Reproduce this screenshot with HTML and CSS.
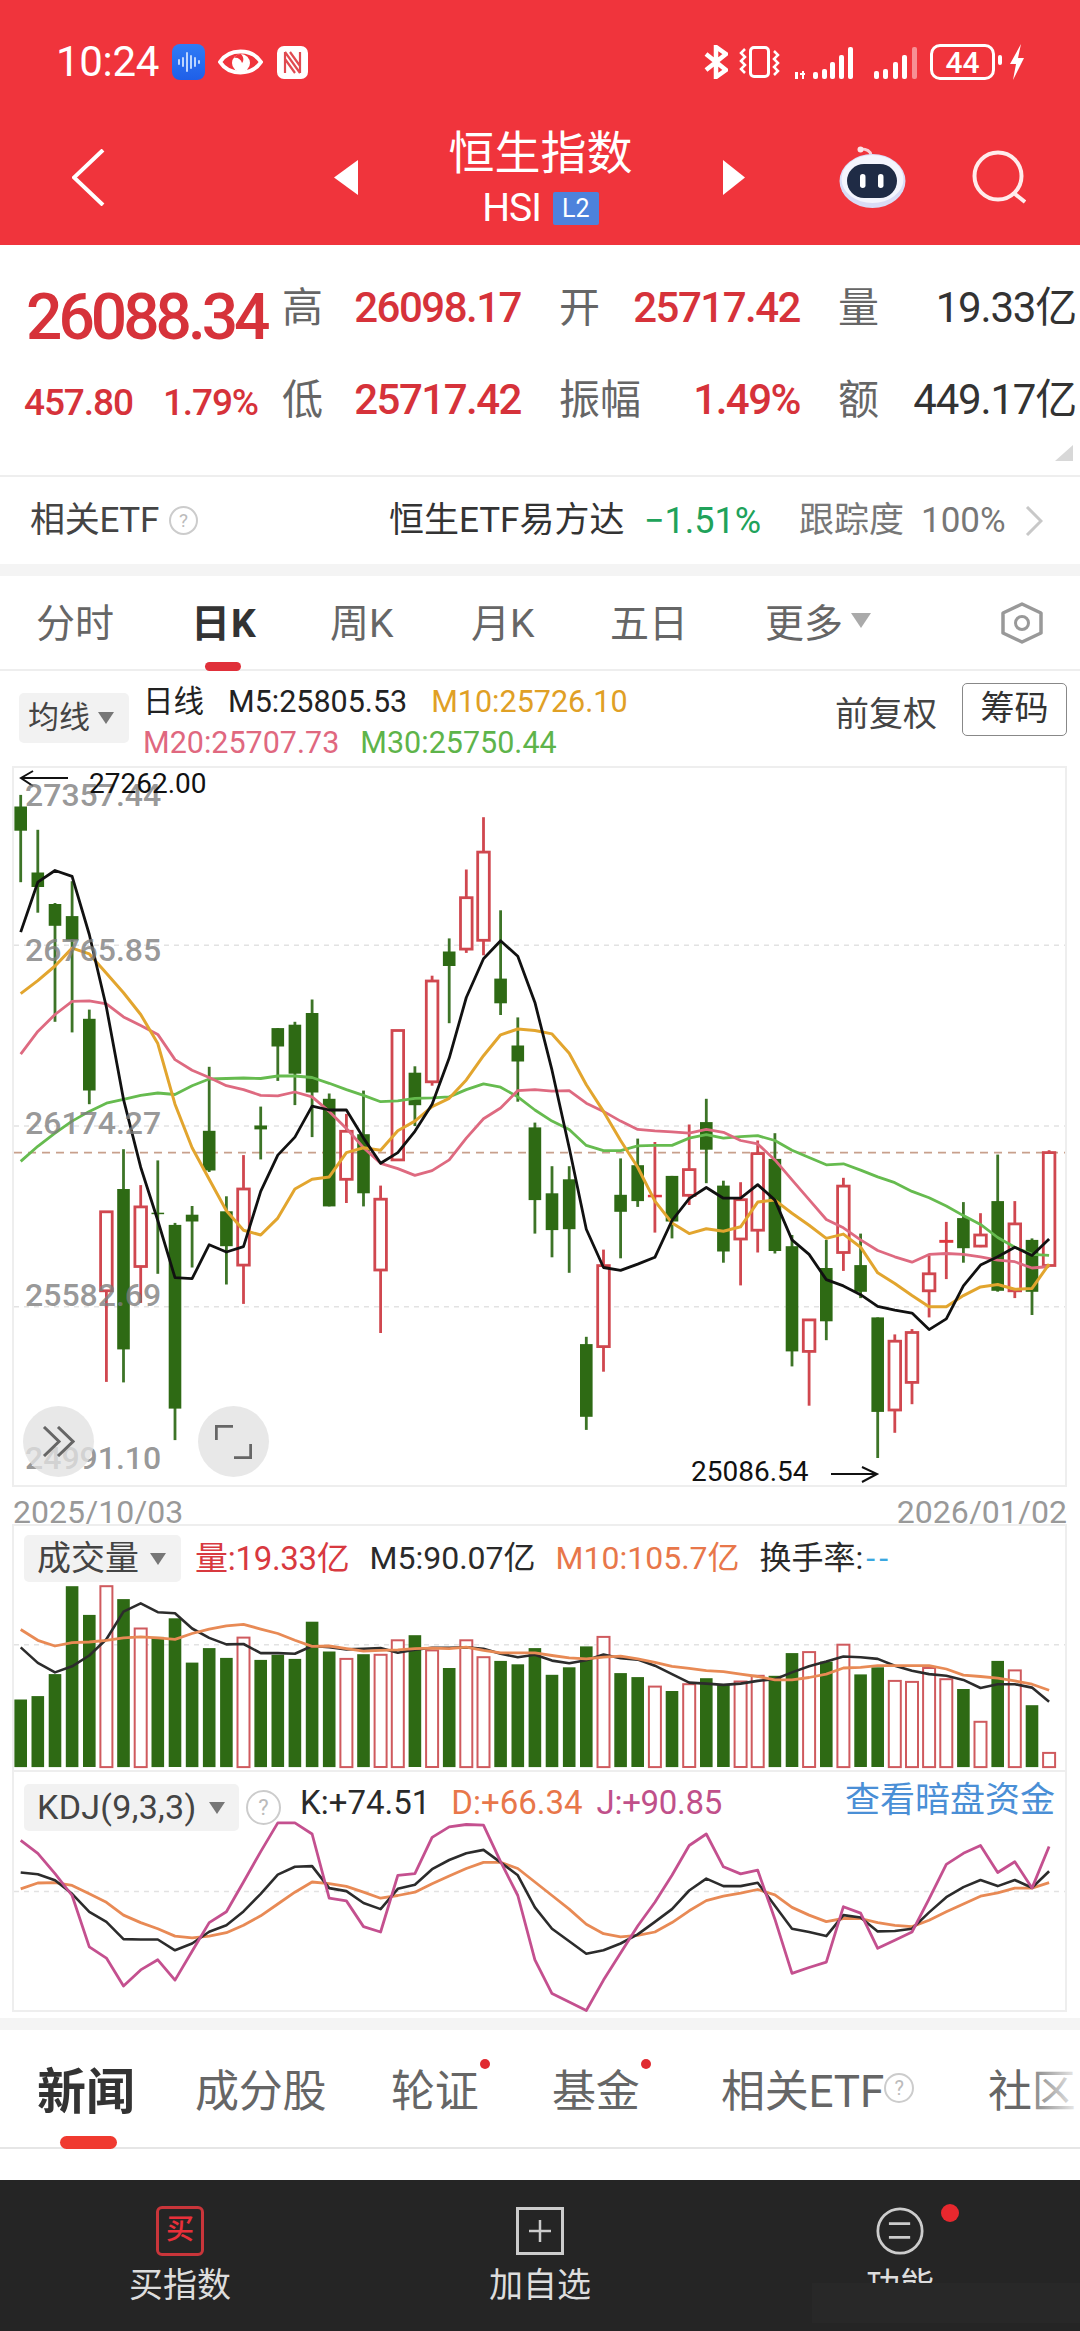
FILE: index.html
```html
<!DOCTYPE html>
<html lang="zh-CN">
<head>
<meta charset="utf-8">
<title>恒生指数</title>
<link rel="stylesheet" href="styles.css">
</head>
<body>
<div class="page">
  <header class="top">
    <div class="status">
      <span class="clock">10:24</span>
      <svg class="st-rec" viewBox="0 0 33 36"><defs><linearGradient id="recfill" x1="0" y1="0" x2="0" y2="1"><stop offset="0" stop-color="#2f7cf6"/><stop offset="1" stop-color="#1f5fe8"/></linearGradient></defs><rect width="33" height="36" rx="8" fill="url(#recfill)"/><path d="M7 16v4M11 14v8M15 9v18M19 12v12M23 14v8M27 17v2" stroke="#cfe2ff" stroke-width="1.800" fill="none" stroke-linecap="round"/></svg>
      <svg class="st-eye" viewBox="0 0 45 30"><path d="M2 15C11 1 34 1 43 15 34 29 11 29 2 15Z" fill="none" stroke="#fff" stroke-width="4"/><circle cx="23" cy="16" r="9" fill="#fff"/><path d="M23 7a9 9 0 0 0-7 4c3-1 7 1 8 5 2-2 2-6-1-9z" fill="#f0343c"/></svg>
      <svg class="st-nfc" viewBox="0 0 31 33"><rect width="31" height="33" rx="7" fill="#fff"/><path d="M8 6v21M23 6v21M8 6l15 21M13 6l10 14M8 13l10 14" stroke="#e04a50" stroke-width="2.200" fill="none"/></svg>
      <span class="st-spacer"></span>
      <svg class="st-bt" viewBox="0 0 24 34"><path d="M2 9l20 16-10 7V2l10 7L2 25" fill="none" stroke="#fff" stroke-width="4.500"/></svg>
      <svg class="st-vib" viewBox="0 0 41 32"><rect x="11.500" y="1.500" width="18" height="29" rx="3.500" fill="none" stroke="#fff" stroke-width="3"/><path d="M6 3L2 7l4 4-4 4 4 4-4 4 4 4M35 5l4 4-4 4 4 4-4 4 4 4 -4 4" fill="none" stroke="#fff" stroke-width="2.500"/></svg>
      <svg class="st-sig" viewBox="0 0 58 33"><rect x="0" y="26" width="3" height="7" fill="#fff"/><rect x="5" y="27" width="5" height="2" fill="#fff"/><rect x="7" y="25" width="2" height="8" fill="#fff"/><rect x="18" y="26" width="5" height="7" rx="2" fill="#fff"/><rect x="27" y="23" width="5" height="10" rx="2" fill="#fff"/><rect x="35" y="16" width="5" height="17" rx="2" fill="#fff"/><rect x="44" y="9" width="5" height="24" rx="2" fill="#fff"/><rect x="53" y="1" width="5" height="32" rx="2" fill="#fff"/></svg>
      <svg class="st-sig2" viewBox="0 0 43 33"><rect x="0" y="25" width="5" height="8" rx="2" fill="#fff"/><rect x="9" y="23" width="5" height="10" rx="2" fill="#fff"/><rect x="19" y="16" width="5" height="17" rx="2" fill="#fff"/><rect x="28" y="9" width="5" height="24" rx="2" fill="#fff"/><rect x="38" y="1" width="5" height="32" rx="2" fill="#fff" opacity=".45"/></svg>
      <span class="battery">44</span>
      <svg class="st-bolt" viewBox="0 0 17 36"><path d="M13 0L2 20h6L5 36 16 14h-6z" fill="#fff"/></svg>
    </div>
    <nav class="nav">
      <svg class="back" viewBox="0 0 33 57"><path d="M31 1L2 28.500 31 56" fill="none" stroke="#fff" stroke-width="4"/></svg>
      <svg class="tri-l" viewBox="0 0 24 35"><path d="M24 0v35L0 17.500z" fill="#fff"/></svg>
      <div class="title">
        <div class="title-main">恒生指数</div>
        <div class="title-sub"><span class="hsi">HSI</span><span class="l2">L2</span></div>
      </div>
      <svg class="tri-r" viewBox="0 0 22 35"><path d="M0 0v35l22-17.500z" fill="#fff"/></svg>
      <svg class="robot" viewBox="0 0 67 62"><path d="M32 9C31 4 27 3 22 3" fill="none" stroke="#f8d0d8" stroke-width="2.800"/><circle cx="21.500" cy="3.500" r="3" fill="#fbe4e8"/><ellipse cx="33.500" cy="35" rx="33" ry="27" fill="#d9dcf6"/><ellipse cx="33.500" cy="33" rx="31" ry="24" fill="#f4f5fd"/><rect x="8" y="18" width="50" height="34" rx="17" fill="#1f2b45"/><rect x="21" y="28" width="5.500" height="14" rx="2.700" fill="#fff"/><rect x="39" y="28" width="5.500" height="14" rx="2.700" fill="#fff"/></svg>
      <svg class="search" viewBox="0 0 54 54"><circle cx="26" cy="26" r="23.500" fill="none" stroke="#ffecec" stroke-width="4"/><path d="M43 44l10 8" fill="none" stroke="#ffecec" stroke-width="4"/></svg>
    </nav>
  </header>

  <section class="quote">
    <div class="stats">
      <div class="big">26088.34</div>
      <div class="cell"><span class="lab">高</span><span class="val">26098.17</span></div>
      <div class="cell"><span class="lab">开</span><span class="val">25717.42</span></div>
      <div class="cell"><span class="lab">量</span><span class="val dark">19.33亿</span></div>
      <div class="change"><span>457.80</span><span>1.79%</span></div>
      <div class="cell"><span class="lab">低</span><span class="val">25717.42</span></div>
      <div class="cell"><span class="lab">振幅</span><span class="val">1.49%</span></div>
      <div class="cell"><span class="lab">额</span><span class="val dark">449.17亿</span></div>
      <svg class="corner" viewBox="0 0 18 16"><path d="M18 0v16H0z" fill="#d8d8d8"/></svg>
    </div>
    <div class="etf">
      <span class="etf-name">相关ETF</span>
      <span class="help help-etf">?</span>
      <span class="etf-fund">恒生ETF易方达</span>
      <span class="etf-chg">−1.51%</span>
      <span class="etf-grey etf-track">跟踪度</span>
      <span class="etf-grey etf-pct">100%</span>
      <svg class="etf-more" viewBox="0 0 18 30"><path d="M2 1l14 14L2 29" fill="none" stroke="#c8c8c8" stroke-width="3"/></svg>
    </div>
  </section>

  <div class="band"></div>

  <div class="ktabs">
    <span class="ktab">分时</span>
    <span class="ktab active">日K</span>
    <span class="ktab">周K</span>
    <span class="ktab">月K</span>
    <span class="ktab">五日</span>
    <span class="ktab">更多<i class="caret"></i></span>
    <svg class="hex" viewBox="0 0 44 42"><path d="M22 2l19 9v20l-19 9-19-9V11z" fill="none" stroke="#999" stroke-width="3.500" stroke-linejoin="round"/><circle cx="22" cy="21" r="6.500" fill="none" stroke="#999" stroke-width="3"/></svg>
  </div>

  <div class="legend">
    <div class="drop drop-ma">均线<i class="caret dk"></i></div>
    <div class="ma-text">
      <div class="ma-line"><span class="c-k">日线</span><span class="c-k">M5:25805.53</span><span class="c-o">M10:25726.10</span></div>
      <div class="ma-line ma-line-b"><span class="c-p">M20:25707.73</span><span class="c-g">M30:25750.44</span></div>
    </div>
    <span class="adj">前复权</span>
    <span class="chips">筹码</span>
  </div>

  <div class="panel chart">
    <svg class="plot" id="main" viewBox="0 766 1080 721"></svg>
    <span class="axis ax1">27357.44</span>
    <span class="axis ax2">26765.85</span>
    <span class="axis ax3">26174.27</span>
    <span class="axis ax4">25582.69</span>
    <span class="axis ax5">24991.10</span>
    <span class="mark mark-hi">27262.00</span>
    <span class="mark mark-lo">25086.54</span>
    <span class="round round-a"><svg viewBox="0 0 33 31"><path d="M2 1l15 14.500L2 30M16 1l15 14.500L16 30" fill="none" stroke="#666" stroke-width="3"/></svg></span>
    <span class="round round-b"><svg viewBox="0 0 37 34"><path d="M1 15V1h17M36 19v14H19" fill="none" stroke="#666" stroke-width="3.500"/></svg></span>
  </div>

  <div class="dates"><span>2025/10/03</span><span>2026/01/02</span></div>

  <div class="panel vol">
    <svg class="plot" id="vol" viewBox="0 1524 1080 248"></svg>
    <div class="vol-head">
      <div class="drop drop-vol">成交量<i class="caret dk"></i></div>
      <span class="c-r">量:19.33亿</span>
      <span class="c-k2">M5:90.07亿</span>
      <span class="c-or">M10:105.7亿</span>
      <span class="c-k2">换手率:<b class="dashes">--</b></span>
    </div>
  </div>

  <div class="panel kdj">
    <svg class="plot" id="kdj" viewBox="0 1772 1080 240"></svg>
    <div class="kdj-head">
      <div class="drop drop-kdj">KDJ(9,3,3)<i class="caret dk"></i></div>
      <span class="help help-kdj">?</span>
      <span class="c-k2 kv kv-k">K:+74.51</span>
      <span class="c-or kv kv-d">D:+66.34</span>
      <span class="c-m kv kv-j">J:+90.85</span>
      <span class="dark-pool">查看暗盘资金</span>
    </div>
  </div>

  <div class="gap-white"></div>
  <div class="band"></div>

  <div class="ntabs">
    <span class="ntab active">新闻</span>
    <span class="ntab">成分股</span>
    <span class="ntab dotted">轮证</span>
    <span class="ntab dotted">基金</span>
    <span class="ntab">相关ETF<span class="help help-n">?</span></span>
    <span class="ntab">社区</span>
  </div>

  <div class="spacer"></div>

  <footer class="bottom">
    <div class="action">
      <span class="ic ic-buy">买</span>
      <span class="act-label">买指数</span>
    </div>
    <div class="action">
      <svg class="ic" viewBox="0 0 48 48"><rect x="1.500" y="1.500" width="45" height="45" fill="none" stroke="#ccc" stroke-width="3"/><path d="M24 13v22M13 24h22" stroke="#ccc" stroke-width="2.500"/></svg>
      <span class="act-label">加自选</span>
    </div>
    <div class="action">
      <svg class="ic" viewBox="0 0 52 52"><circle cx="26" cy="26" r="24" fill="none" stroke="#ccc" stroke-width="3"/><path d="M14 18h23M14 33h23" stroke="#ccc" stroke-width="3"/></svg>
      <span class="act-label">功能</span>
      <i class="act-dot"></i>
    </div>
    <div class="smudge"></div>
  </footer>
</div>
<script src="script.js"></script>
</body>
</html>
```
FILE: styles.css
```css
* { box-sizing: border-box; }
html, body { margin: 0; padding: 0; background: #fff; }
body { font-family: Roboto, "Noto Sans CJK SC", sans-serif; color: #222; }
.page { width: 1080px; height: 2331px; overflow: hidden; display: flex; flex-direction: column; }
svg { display: block; flex: none; }
i { font-style: normal; }

/* red header */
.top { background: #f0343c; height: 245px; color: #fff; flex: none; }
.status { height: 109px; padding: 15px 55px 0 56px; display: flex; align-items: center; }
.clock { font-size: 42px; line-height: 50px; width: 116px; letter-spacing: -0.300px; }
.st-rec { width: 33px; height: 36px; }
.st-eye { width: 45px; height: 30px; margin-left: 13px; }
.st-nfc { width: 31px; height: 33px; margin-left: 14px; }
.st-spacer { flex: 1; }
.st-bt { width: 24px; height: 34px; }
.st-vib { width: 41px; height: 32px; margin-left: 11px; }
.st-sig { width: 58px; height: 33px; margin-left: 15px; align-self: center; }
.st-sig2 { width: 43px; height: 33px; margin-left: 21px; }
.battery { width: 65px; height: 36px; margin-left: 13px; border: 3px solid #fff; border-radius: 10px; font-size: 30px; font-weight: 500; line-height: 31px; text-align: center; position: relative; }
.battery::after { content: ""; position: absolute; right: -10px; top: 8px; width: 4px; height: 10px; border-radius: 2px; background: #fff; }
.st-bolt { width: 17px; height: 36px; margin-left: 13px; }

.nav { height: 136px; padding-left: 72px; display: flex; align-items: center; }
.back { width: 33px; height: 57px; }
.tri-l { width: 24px; height: 35px; margin-left: 229px; }
.title { width: 365px; text-align: center; }
.title-main { font-size: 46px; line-height: 54px; }
.title-sub { display: flex; justify-content: center; align-items: center; gap: 12px; height: 40px; margin-top: 8px; }
.hsi { font-size: 39px; line-height: 40px; letter-spacing: -1px; }
.l2 { background: #4d82dc; width: 46px; height: 33px; font-size: 25px; line-height: 33px; text-align: center; border-radius: 2px; }
.tri-r { width: 22px; height: 35px; }
.robot { width: 67px; height: 62px; margin-left: 94px; }
.search { width: 54px; height: 54px; margin-left: 66px; }

/* quote */
.quote { height: 319px; flex: none; }
.stats { height: 232px; padding: 17px 4px 0 24px; border-bottom: 2px solid #eee; display: grid; grid-template-columns: 220px 239px 241px 238px; column-gap: 38px; grid-auto-rows: 92px; position: relative; }
.big { font-size: 64px; height: 92px; line-height: 112px; font-weight: 500; color: #d6323a; letter-spacing: -4px; margin-left: 2px; white-space: nowrap; }
.cell { display: flex; justify-content: space-between; align-items: center; }
.lab { font-size: 41px; line-height: 50px; color: #666; white-space: nowrap; }
.val { font-size: 42px; line-height: 50px; font-weight: 500; color: #d6323a; letter-spacing: -1.500px; white-space: nowrap; }
.val.dark { color: #333; font-weight: 400; letter-spacing: -1.200px; }
.change { display: flex; justify-content: space-between; align-items: center; width: 234px; padding-top: 5px; color: #d6323a; font-size: 37px; font-weight: 500; letter-spacing: -1.100px; white-space: nowrap; }
.corner { position: absolute; right: 7px; bottom: 14px; width: 18px; height: 16px; }
.etf { height: 87px; padding: 0 37px 0 30px; display: flex; align-items: center; color: #444; font-size: 35px; }
.etf > span { line-height: 44px; white-space: nowrap; }
.etf-name { width: 139px; letter-spacing: -0.300px; }
.help { display: inline-block; border: 2px solid #ccc; border-radius: 50%; color: #bbb; text-align: center; font-weight: 400; }
.help-etf { width: 29px; height: 29px; font-size: 19px; line-height: 25px !important; }
.etf-fund { margin-left: auto; width: 255px; font-size: 35px; color: #333; }
.etf-chg { width: 155px; color: #20a25a; font-size: 36px; letter-spacing: 0; }
.etf-grey { color: #777; }
.etf-track { width: 122px; font-size: 35px; }
.etf-pct { width: 104px; }
.etf-more { width: 18px; height: 30px; }

.band { height: 12px; background: #f4f4f4; flex: none; }

/* k tabs */
.ktabs { height: 95px; padding-left: 36px; border-bottom: 2px solid #eee; display: grid; grid-template-columns: 155px 139px 141px 139px 155px 235px 44px; align-items: stretch; flex: none; }
.ktab { display: flex; align-items: center; padding-bottom: 5px; font-size: 39px; color: #666; position: relative; white-space: nowrap; }
.ktab.active { color: #333; font-weight: 700; letter-spacing: 1px; }
.ktab.active::after { content: ""; position: absolute; left: 14px; bottom: -2px; width: 36px; height: 9px; border-radius: 5px; background: #e0303a; }
.caret { display: inline-block; width: 0; height: 0; border-left: 10px solid transparent; border-right: 10px solid transparent; border-top: 15px solid #aaa; margin-left: 8px; }
.caret.dk { border-left-width: 8px; border-right-width: 8px; border-top: 12px solid #777; }
.hex { width: 44px; height: 42px; align-self: center; }

/* legend */
.legend { height: 95px; padding: 0 13px 0 19px; display: flex; align-items: flex-start; flex: none; }
.drop { background: #f2f2f2; border-radius: 5px; display: flex; align-items: center; color: #444; white-space: nowrap; }
.drop-ma { width: 110px; height: 50px; margin-top: 22px; padding-left: 9px; font-size: 31px; line-height: 50px; }
.ma-text { margin: 10px 0 0 14px; font-size: 30.500px; line-height: 41px; }
.ma-line { display: flex; gap: 24px; white-space: nowrap; }
.ma-line-b { gap: 21px; }
.c-k { color: #222; }
.c-o { color: #e0a025; }
.c-p { color: #e0687f; }
.c-g { color: #5eb44a; }
.adj { margin: 21px 0 0 auto; font-size: 34px; line-height: 44px; color: #444; }
.chips { width: 105px; height: 53px; margin: 12px 0 0 25px; border: 1.500px solid #888; border-radius: 5px; font-size: 34px; line-height: 49px; text-align: center; color: #333; }

/* panels */
.panel { position: relative; margin-left: 12px; width: 1055px; border: 2px solid #eee; flex: none; }
.plot { position: absolute; left: -14px; top: -2px; width: 1080px; }
.chart { height: 721px; }
.chart .plot { height: 721px; }
.vol { height: 248px; }
.vol .plot { height: 248px; }
.kdj { height: 240px; border-top: 0; }
.kdj .plot { height: 240px; top: 0; }

/* chart marks */
.grid { stroke: #e2e2e2; stroke-width: 1.500; stroke-dasharray: 5 5; }
.price { stroke: #c8a08c; stroke-width: 1.800; stroke-dasharray: 8 6; }
.wick-g { stroke: #3d7427; stroke-width: 2.800; }
.wick-r, .wick-d { stroke: #d0474f; stroke-width: 2.800; }
.body-g { fill: #2e6a14; }
.body-r { fill: #fff; stroke: #d0474f; stroke-width: 2.800; }
.body-d { fill: #e0383f; }
.bar-r { fill: #fff; stroke: #cf5a5e; stroke-width: 2; }
.ln { fill: none; stroke-width: 2.600; stroke-linejoin: round; }
.l-k { stroke: #111; stroke-width: 2.800; }
.l-o { stroke: #e2a52e; stroke-width: 3; }
.l-p { stroke: #de6a80; stroke-width: 2.800; }
.l-g { stroke: #66bb4f; stroke-width: 2.800; }
.l-k2 { stroke: #2c2c2c; }
.l-or { stroke: #e88a55; stroke-width: 2.800; }
.l-m { stroke: #c4508f; stroke-width: 2.800; }
.arrow { fill: none; stroke: #111; stroke-width: 2; }

.axis { position: absolute; left: 11px; font-size: 32px; line-height: 36px; font-weight: 500; color: rgba(125,125,125,.8); }
.ax1 { top: 9px; }
.ax2 { top: 164px; }
.ax3 { top: 337px; }
.ax4 { top: 509px; }
.ax5 { top: 672px; }
.mark { position: absolute; font-size: 28px; line-height: 34px; color: #111; }
.mark-hi { left: 75px; top: -1px; }
.mark-lo { left: 677px; top: 687px; }
.round { position: absolute; top: 638px; width: 71px; height: 71px; border-radius: 50%; background: rgba(226,226,226,.78); display: flex; align-items: center; justify-content: center; }
.round-a { left: 9px; }
.round-b { left: 184px; }
.round-a svg { width: 33px; height: 31px; }
.round-b svg { width: 37px; height: 34px; }

.dates { height: 37px; padding: 13px 13px 0; display: flex; justify-content: space-between; font-size: 32px; line-height: 24px; color: #999; flex: none; }

.vol-head, .kdj-head { position: relative; display: flex; align-items: center; padding-left: 10px; font-size: 32px; white-space: nowrap; }
.vol-head { padding-top: 9px; line-height: 47px; }
.vol-head > span { margin-left: 20px; }
.vol-head > .c-r { margin-left: 14px; font-size: 33px; letter-spacing: -0.300px; }
.drop-vol { width: 157px; height: 47px; padding-left: 13px; font-size: 34px; }
.drop-vol .caret { margin-left: 11px; }
.c-r { color: #d8393f; }
.c-k2 { color: #2a2a2a; }
.c-or { color: #e8774a; }
.c-m { color: #c0508a; }
.dashes { color: #3aa7e0; font-weight: 400; letter-spacing: 4px; margin-left: 3px; }

.kdj-head { padding: 12px 10px 0; align-items: flex-start; }
.drop-kdj { width: 215px; height: 47px; padding-left: 13px; font-size: 34px; line-height: 47px; letter-spacing: 0.300px; }
.drop-kdj .caret { margin-left: 12px; }
.help-kdj { width: 35px; height: 35px; margin: 6px 0 0 7px; font-size: 22px; line-height: 31px; border-width: 2.500px; }
.kv { line-height: 37px; font-size: 33px; }
.kv-k { margin-left: 19px; }
.kv-d { margin-left: 21px; }
.kv-j { margin-left: 14px; letter-spacing: -0.300px; }
.dark-pool { margin-left: auto; color: #4a8fd6; font-size: 35px; line-height: 34px; }

.gap-white { height: 6px; flex: none; }

/* news tabs */
.ntabs { height: 119px; padding-left: 37px; border-bottom: 2px solid #e6e6e6; display: grid; grid-template-columns: 158px 196px 161px 169px 267px 90px; position: relative; flex: none; }
.ntabs::after { content: ""; position: absolute; right: 0; top: 20px; bottom: 20px; width: 48px; background: linear-gradient(to right, rgba(255,255,255,.2), rgba(255,255,255,.92)); }
.ntab { display: flex; align-items: center; padding-bottom: 2px; position: relative; font-size: 44px; color: #666; white-space: nowrap; letter-spacing: -0.200px; }
.ntab.active { font-size: 49px; font-weight: 700; color: #333; letter-spacing: 0; }
.ntab.active::after { content: ""; position: absolute; left: 23px; bottom: -2px; width: 57px; height: 13px; border-radius: 7px; background: #f03a30; }
.ntab.dotted::after { content: ""; position: absolute; left: 89px; top: 29px; width: 10px; height: 10px; border-radius: 50%; background: #e02a30; }
.help-n { width: 30px; height: 30px; font-size: 20px; line-height: 26px; margin-left: 0; }

.spacer { height: 31px; flex: none; }

/* bottom bar */
.bottom { height: 151px; background: #252525; display: grid; grid-template-columns: repeat(3, 360px); position: relative; flex: none; }
.action { display: flex; flex-direction: column; align-items: center; padding-top: 26px; position: relative; }
.ic { width: 48px; height: 50px; }
.ic-buy { border: 3px solid #c9353a; border-radius: 6px; color: #e8303a; font-size: 28px; line-height: 42px; text-align: center; font-weight: 500; }
.act-label { margin-top: 9px; font-size: 34px; line-height: 40px; color: #ddd; }
.act-dot { position: absolute; left: 221px; top: 24px; width: 18px; height: 18px; border-radius: 50%; background: #e8282e; }
.smudge { position: absolute; left: 812px; top: 103px; width: 268px; height: 40px; background: #282828; }
```
FILE: script.js
```js
// Chart data, read in image-space units; converted to page coordinates below.
var X = function (i) { return 20.7 + 17.14 * i; };
var yM = function (p) { return 760 + p / 2.063; };
var yV = function (p) { return 1500 + p / 2.958; };

var candles = [
  [72,96,146,252,'g'],[144,232,262,315,'g'],[295,297,342,540,'g'],[250,322,372,562,'g'],[515,534,682,710,'g'],
  [932,932,1095,1283,'r'],[803,885,1216,1284,'g'],[877,922,1045,1120,'r'],[826,934,937,1060,'g'],[955,959,1338,1403,'g'],
  [920,938,952,1047,'g'],[633,765,847,850,'g'],[900,931,1003,1082,'g'],[815,885,1042,1122,'r'],[715,754,762,824,'g'],
  [553,553,591,662,'g'],[540,546,647,712,'g'],[494,522,686,778,'g'],[688,699,921,921,'g'],[730,766,865,914,'r'],
  [682,772,894,921,'g'],[878,906,1052,1182,'r'],[558,558,825,825,'r'],[632,645,712,755,'g'],[445,456,664,672,'r'],
  [368,395,425,543,'g'],[226,284,390,398,'r'],[118,190,372,403,'r'],[310,451,502,526,'g'],[531,589,622,705,'g'],
  [748,758,908,977,'g'],[838,894,970,1026,'g'],[838,865,968,1058,'g'],[1190,1205,1355,1382,'g'],[1010,1043,1210,1262,'r'],
  [822,897,932,1028,'g'],[781,836,910,922,'g'],[788,897,900,975,'d'],[858,858,952,987,'g'],[752,845,898,918,'r'],
  [699,747,804,873,'g'],[868,878,1014,1037,'g'],[871,907,988,1084,'r'],[785,812,970,1016,'r'],[770,823,1013,1018,'g'],
  [980,1003,1220,1251,'g'],[1155,1155,1220,1332,'r'],[990,1048,1158,1197,'g'],[862,879,1016,1054,'r'],[977,1042,1097,1110,'g'],
  [1150,1150,1345,1440,'g'],[1185,1199,1341,1388,'r'],[1174,1181,1284,1329,'r'],[1022,1060,1095,1150,'r'],[953,990,994,1071,'d'],
  [912,945,1007,1037,'g'],[935,980,1003,1005,'r'],[814,910,1095,1097,'g'],[910,957,1095,1110,'r'],[987,990,1097,1145,'g'],
  [805,810,1043,1043,'r']
];
var m5 = [355,252,228,240,360,510,700,840,950,1068,1070,1000,1015,1004,890,815,778,714,722,722,780,832,810,766,710,615,490,410,373,405,500,640,800,968,1047,1053,1040,1026,950,905,882,904,904,876,908,990,1020,1072,1085,1103,1127,1135,1141,1175,1153,1085,1042,1025,1005,1022,988];
var m10 = [482,455,425,388,400,440,480,525,585,710,800,865,930,970,980,945,885,865,860,810,800,805,765,745,715,698,660,610,567,555,558,565,605,670,725,785,840,910,955,977,967,972,963,912,908,935,960,987,978,1005,1058,1080,1105,1128,1128,1105,1087,1082,1092,1090,1040];
var m20 = [607,560,525,498,497,503,530,548,566,618,640,655,672,680,692,693,685,695,725,760,800,832,843,857,847,825,780,740,718,682,680,683,682,708,725,745,762,765,767,770,762,768,785,792,825,866,907,948,965,990,1012,1025,1036,1020,1018,1020,1025,1032,1035,1048,1045];
var m30 = [828,797,770,745,725,708,700,692,687,690,672,658,657,656,657,652,652,655,667,680,692,705,703,698,697,695,680,668,675,695,722,745,762,795,806,806,796,795,795,780,773,780,777,775,785,805,820,835,833,846,860,872,890,903,920,940,958,985,1005,1020,1022];

var bars = [[590,'g'],[580,'g'],[515,'g'],[255,'g'],[340,'g'],[255,'r'],[293,'g'],[380,'r'],[405,'g'],[350,'g'],[481,'g'],[438,'g'],[467,'g'],[407,'r'],[473,'g'],[458,'g'],[470,'g'],[360,'g'],[448,'g'],[470,'r'],[456,'g'],[458,'r'],[415,'r'],[400,'g'],[445,'r'],[497,'g'],[415,'r'],[465,'r'],[476,'g'],[486,'g'],[438,'g'],[517,'g'],[495,'g'],[433,'g'],[405,'r'],[512,'g'],[524,'g'],[552,'r'],[565,'g'],[545,'r'],[527,'g'],[545,'g'],[537,'r'],[520,'r'],[520,'g'],[453,'g'],[450,'r'],[478,'g'],[428,'r'],[516,'g'],[495,'g'],[535,'r'],[538,'r'],[497,'r'],[530,'r'],[559,'g'],[656,'r'],[476,'g'],[504,'r'],[607,'g'],[748,'r']];
var v5 = [436,482,510,492,460,412,330,306,332,335,380,408,427,426,453,453,455,432,435,442,440,438,452,443,437,437,436,440,455,465,458,475,483,474,457,468,472,490,515,540,543,547,543,535,530,510,492,478,463,465,470,490,505,515,520,532,556,545,545,555,597];
var v10 = [383,415,432,422,420,415,408,405,408,412,395,382,372,368,382,395,415,433,432,440,447,445,443,440,438,440,435,445,452,452,452,460,467,470,465,462,470,480,492,498,505,508,515,522,532,532,525,515,497,495,490,490,490,490,500,518,522,527,535,545,563];

var K = [1102,1107,1125,1165,1218,1248,1299,1300,1300,1332,1312,1277,1258,1217,1165,1108,1085,1083,1148,1157,1192,1210,1150,1138,1092,1065,1045,1035,1072,1110,1205,1268,1305,1342,1332,1312,1285,1248,1210,1155,1120,1142,1142,1132,1200,1268,1278,1290,1228,1235,1276,1275,1268,1220,1175,1145,1124,1142,1124,1147,1098];
var D = [1150,1133,1132,1140,1165,1190,1228,1250,1268,1290,1295,1290,1280,1258,1230,1195,1160,1130,1135,1143,1160,1178,1170,1160,1135,1112,1090,1072,1072,1090,1130,1170,1210,1255,1283,1292,1288,1278,1250,1215,1185,1172,1163,1152,1168,1205,1228,1247,1238,1238,1250,1258,1262,1243,1218,1195,1172,1162,1148,1148,1132];
var J = [1007,1045,1105,1170,1322,1355,1438,1390,1360,1420,1335,1250,1218,1130,1040,955,955,988,1178,1186,1262,1278,1110,1105,998,967,960,962,1070,1170,1360,1460,1485,1510,1420,1340,1260,1190,1110,1022,988,1085,1106,1095,1240,1400,1383,1367,1203,1222,1326,1302,1278,1180,1078,1045,1022,1102,1070,1148,1025];

function f(n) { return n.toFixed(1); }
function poly(arr, conv, cls) {
  var pts = arr.map(function (p, i) { return f(X(i)) + ',' + f(conv(p)); }).join(' ');
  return '<polyline class="ln ' + cls + '" points="' + pts + '"/>';
}
function hline(y, cls) {
  return '<line class="' + cls + '" x1="14" x2="1065" y1="' + f(y) + '" y2="' + f(y) + '"/>';
}

// main chart
var s = '';
[382, 755, 1128].forEach(function (p) { s += hline(yM(p), 'grid'); });
s += hline(yM(810), 'price');
candles.forEach(function (c, i) {
  var x = X(i), kind = c[4];
  s += '<line class="wick-' + kind + '" x1="' + f(x) + '" x2="' + f(x) + '" y1="' + f(yM(c[0])) + '" y2="' + f(yM(c[3])) + '"/>';
  var top = yM(c[1]), bot = yM(c[2]);
  if (kind === 'g') {
    s += '<rect class="body-g" x="' + f(x - 6.3) + '" y="' + f(top) + '" width="12.6" height="' + f(bot - top) + '"/>';
  } else if (kind === 'r') {
    s += '<rect class="body-r" x="' + f(x - 5.8) + '" y="' + f(top) + '" width="11.6" height="' + f(bot - top) + '"/>';
  } else {
    s += '<rect class="body-d" x="' + f(x - 7) + '" y="' + f(top) + '" width="14" height="' + f(bot - top + 1) + '"/>';
  }
});
s += poly(m30, yM, 'l-g') + poly(m20, yM, 'l-p') + poly(m10, yM, 'l-o') + poly(m5, yM, 'l-k');
s += '<path class="arrow" d="M68 778H22M33 771L21 778L33 786"/>';
s += '<path class="arrow" d="M831 1474H876M862 1467L877 1474L862 1482"/>';
document.getElementById('main').innerHTML = s;

// volume
var v = hline(yV(428), 'grid');
var base = yV(790);
bars.forEach(function (b, i) {
  var x = X(i), top = yV(b[0]);
  if (b[1] === 'g') {
    v += '<rect class="body-g" x="' + f(x - 6.3) + '" y="' + f(top) + '" width="12.6" height="' + f(base - top) + '"/>';
  } else {
    v += '<rect class="bar-r" x="' + f(x - 6) + '" y="' + f(top) + '" width="12" height="' + f(base - top) + '"/>';
  }
});
v += poly(v5, yV, 'l-k2') + poly(v10, yV, 'l-or');
document.getElementById('vol').innerHTML = v;

// KDJ
var k = hline(yV(1158), 'grid');
k += poly(D, yV, 'l-or') + poly(K, yV, 'l-k2') + poly(J, yV, 'l-m');
document.getElementById('kdj').innerHTML = k;
```
